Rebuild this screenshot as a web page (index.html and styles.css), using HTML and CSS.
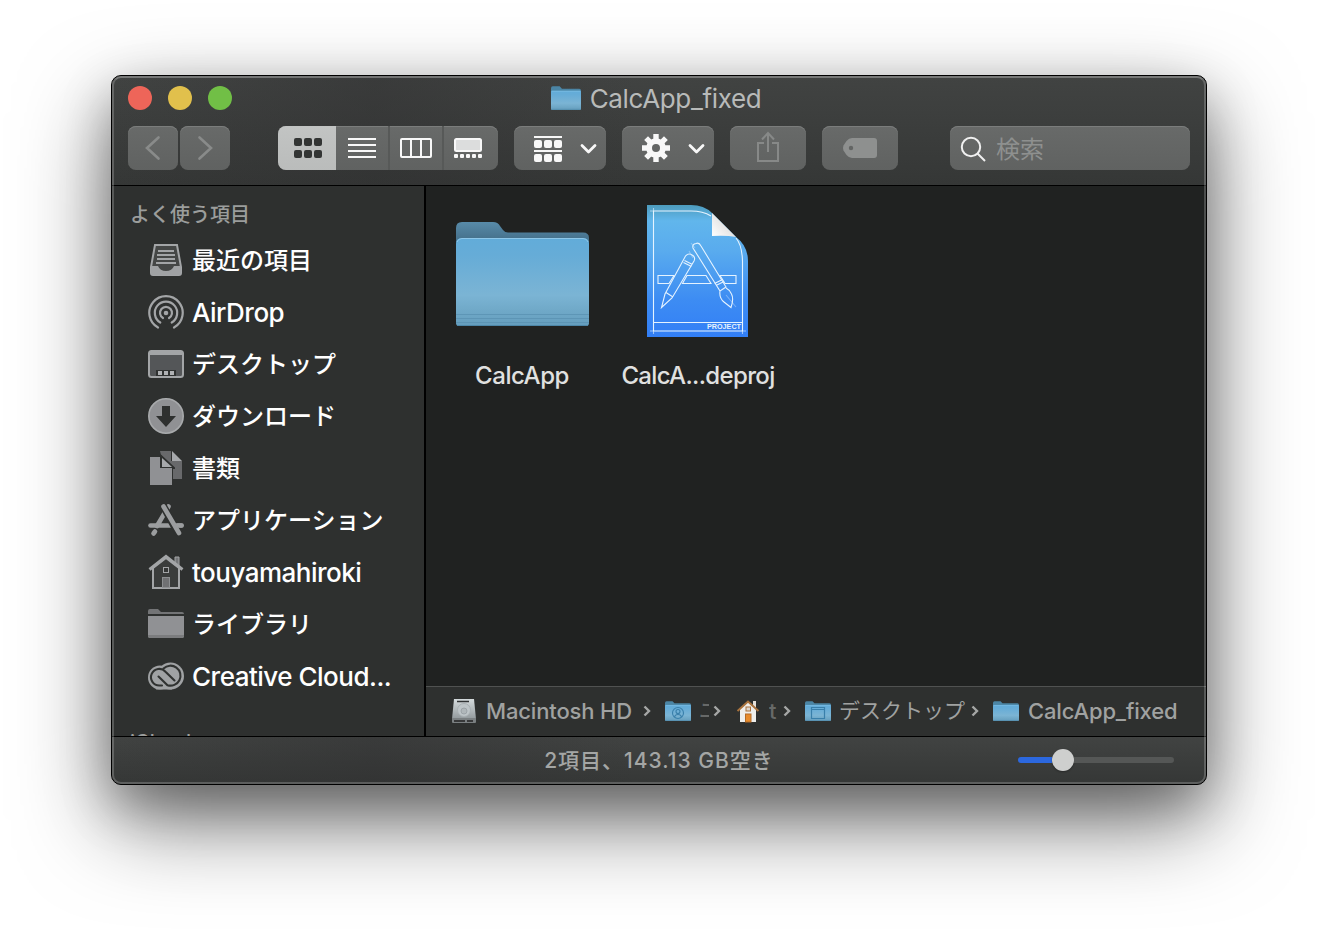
FILE: index.html
```html
<!DOCTYPE html>
<html lang="ja">
<head>
<meta charset="utf-8">
<title>CalcApp_fixed</title>
<link rel="stylesheet" href="styles.css">
</head>
<body>
<svg class="defs" aria-hidden="true">
  <defs>
    <linearGradient id="front" x1="0" y1="0" x2="0" y2="1">
      <stop offset="0" stop-color="#62acd9"/><stop offset=".2" stop-color="#66acd7"/><stop offset=".65" stop-color="#7bb4d4"/><stop offset=".82" stop-color="#70a9c8"/><stop offset="1" stop-color="#649dbd"/>
    </linearGradient>
    <linearGradient id="back" x1="0" y1="0" x2="0" y2="1">
      <stop offset="0" stop-color="#588ba9"/><stop offset=".8" stop-color="#446f89"/>
    </linearGradient>
    <linearGradient id="blueprint" x1="0" y1="0" x2="0" y2="1">
      <stop offset="0" stop-color="#4d9cbd"/><stop offset=".12" stop-color="#61b6ec"/><stop offset=".35" stop-color="#59abee"/><stop offset=".72" stop-color="#3d8cf3"/><stop offset="1" stop-color="#327ff6"/>
    </linearGradient>
    <linearGradient id="curl" x1="0" y1="1" x2=".7" y2=".4">
      <stop offset="0" stop-color="#fff"/><stop offset="1" stop-color="#dedede"/>
    </linearGradient>
    <linearGradient id="disk" x1="0" y1="0" x2="0" y2="1">
      <stop offset="0" stop-color="#d5dbdd"/><stop offset="1" stop-color="#92999c"/>
    </linearGradient>
  </defs>
  <symbol id="folder" viewBox="0 0 26 20" preserveAspectRatio="none">
    <path d="M0 2Q0 .3 1.500 .3H7.500L9.500 2.200H24.500Q26 2.200 26 4V8H0Z" fill="#4b85a5"/>
    <rect y="4" width="26" height="16" rx="1" fill="url(#front)"/>
    <path d="M.5 4.400H25.500" stroke="#7dbfe6" stroke-width=".6"/>
    <path d="M.5 19.500H25.500" stroke="#568fae" stroke-width=".8"/>
  </symbol>
</svg>

<main class="window">
  <header class="toolbar">
    <div class="titlebar">
      <div class="lights"><i class="light red"></i><i class="light yellow"></i><i class="light green"></i></div>
      <div class="title"><svg width="30" height="24"><use href="#folder" width="30" height="24"/></svg><span>CalcApp_fixed</span></div>
    </div>
    <div class="tools">
      <div class="btn nav"><svg width="50" height="44"><path d="M30.500 11.500L19 22L30.500 32.500" class="dim"/></svg></div>
      <div class="btn nav"><svg width="50" height="44"><path d="M19.500 11.500L31 22L19.500 32.500" class="dim"/></svg></div>
      <div class="segments">
        <div class="seg on"><svg width="58" height="44" fill="#333534"><rect x="16" y="12" width="8" height="8" rx="2"/><rect x="26" y="12" width="8" height="8" rx="2"/><rect x="36" y="12" width="8" height="8" rx="2"/><rect x="16" y="24" width="8" height="8" rx="2"/><rect x="26" y="24" width="8" height="8" rx="2"/><rect x="36" y="24" width="8" height="8" rx="2"/></svg></div>
        <div class="seg list"><svg width="52" height="44"><path d="M12 13H40M12 19H40M12 25H40M12 31H40" stroke="#f8f8f8" stroke-width="2"/></svg></div>
        <div class="seg"><svg width="52" height="44" fill="none" stroke="#f8f8f8" stroke-width="2"><rect x="11" y="13" width="30" height="18" rx="1"/><path d="M21 13V31M31 13V31"/></svg></div>
        <div class="seg"><svg width="52" height="44" fill="#f8f8f8"><rect x="11" y="13" width="26" height="12" rx="1.500" fill="#dcdddd" stroke="#f8f8f8" stroke-width="2"/><rect x="10" y="28" width="4" height="4" rx="1"/><rect x="16" y="28" width="4" height="4" rx="1"/><rect x="22" y="28" width="4" height="4" rx="1"/><rect x="28" y="28" width="4" height="4" rx="1"/><rect x="34" y="28" width="4" height="4" rx="1"/></svg></div>
      </div>
      <div class="btn menu"><svg width="92" height="44" fill="#f8f8f8"><path d="M20 10H48V12H20ZM20 24H48V26H20Z"/><rect x="20" y="14" width="8" height="8" rx="2"/><rect x="30" y="14" width="8" height="8" rx="2"/><rect x="40" y="14" width="8" height="8" rx="2"/><rect x="20" y="28" width="8" height="8" rx="2"/><rect x="30" y="28" width="8" height="8" rx="2"/><rect x="40" y="28" width="8" height="8" rx="2"/><path d="M68 19.500L74.500 26L81 19.500" class="caret"/></svg></div>
      <div class="btn menu"><svg width="92" height="44"><g stroke="#f8f8f8" stroke-width="5.400"><path d="M34 8V36M20 22H48M24.100 12.100L43.900 31.900M43.900 12.100L24.100 31.900"/></g><circle cx="34" cy="22" r="9.800" fill="#f8f8f8"/><circle cx="34" cy="22" r="4" fill="#636564"/><path d="M68 19.500L74.500 26L81 19.500" class="caret"/></svg></div>
      <div class="btn single"><svg width="76" height="44" fill="none" stroke="#878988" stroke-width="2"><path d="M34 17H28V35H48V17H42M38 26V8M32 13.500L38 7L44 13.500"/></svg></div>
      <div class="btn single"><svg width="76" height="44"><path d="M30 12H52Q55 12 55 15V29Q55 32 52 32H30Q27 32 24.500 29L21.500 24.500Q20.500 22 21.500 19.500L24.500 15Q27 12 30 12Z" fill="#8e908f"/><circle cx="29" cy="22" r="2.200" fill="#636564"/></svg></div>
      <div class="btn search"><svg width="46" height="44" fill="none" stroke="#f0f0f0" stroke-width="2"><circle cx="21" cy="21" r="9.200"/><path d="M27.500 27.500L35 35"/></svg><span>検索</span></div>
    </div>
  </header>

  <div class="body">
    <aside class="sidebar">
      <h2>よく使う項目</h2>
      <ul>
        <li><svg width="36" height="36"><path d="M7 3H29L33 25V31Q33 33 31 33H5Q3 33 3 31V25Z" fill="#454746" stroke="#a3a5a7" stroke-width="2"/><path d="M3 24H10Q12 29 18 29T26 24H33V31Q33 33 31 33H5Q3 33 3 31Z" fill="#a0a2a4"/><path d="M10 9H26M9 13H27M9 17H27M8 21H28" stroke="#a3a5a7" stroke-width="2"/></svg><span>最近の項目</span></li>
        <li class="latin"><svg width="36" height="36" fill="none" stroke="#a3a5a7" stroke-width="2.200" stroke-linecap="round"><circle cx="18" cy="19" r="2.300" fill="#a3a5a7" stroke="none"/><path d="M15 24A6 6 0 1 1 21 24"/><path d="M12.300 28.500A11.200 11.200 0 1 1 23.700 28.500"/><path d="M10 33.500A16.700 16.700 0 1 1 26 33.500"/></svg><span>AirDrop</span></li>
        <li><svg width="36" height="36"><rect x="1" y="5" width="34" height="26" rx="2.500" fill="#545658" stroke="#a3a5a7" stroke-width="2"/><path d="M2 5H34V9H2Z" fill="#a3a5a7"/><path d="M8 24H28V30H8Z" fill="#303231"/><path d="M10 25H14V29H10ZM16 25H20V29H16ZM22 25H26V29H22Z" fill="#b0b2b4"/></svg><span>デスクトップ</span></li>
        <li><svg width="36" height="36"><circle cx="18" cy="18" r="17.200" fill="#909194" stroke="#a8aaac" stroke-width="1.600"/><path d="M14 8H22V18H28L18 29L8 18H14Z" fill="#2e302f"/></svg><span>ダウンロード</span></li>
        <li><svg width="36" height="36"><path d="M12 1H23V11H34V29H25V17L13 5Z" fill="#68696b"/><path d="M24 1L34 11H24Z" fill="#a7a9ac"/><path d="M2 7H12V18H24V35H2Z" fill="#909194"/><path d="M12 5L26 18V19" fill="none" stroke="#2e302f" stroke-width="2"/><path d="M14 8L24 17H14Z" fill="#a7a9ac"/></svg><span>書類</span></li>
        <li><svg width="36" height="36" fill="none" stroke="#9b9d9f" stroke-width="4.600" stroke-linecap="round"><path d="M20.500 4.500L9 24"/><path d="M2.500 23.500H33.500"/><path d="M7 29.500L5.500 31.500"/><path d="M15 3.500L31 33" stroke="#2e302f" stroke-width="7.500" stroke-linecap="butt"/><path d="M15.500 4.500L31 31"/><path d="M28 23.500H33.500"/></svg><span>アプリケーション</span></li>
        <li class="latin"><svg width="36" height="36"><path d="M27 3H31V14L27 10Z" fill="#747678" stroke="#a3a5a7"/><path d="M5 14L18 4L31 14V34H5Z" fill="#3a3c3b" stroke="#a3a5a7" stroke-width="2"/><path d="M1.500 15.500L18 2.500L34.500 15.500" fill="none" stroke="#a3a5a7" stroke-width="3"/><rect x="15.500" y="13.500" width="5" height="5" fill="#343635" stroke="#a3a5a7"/><rect x="14.500" y="23.500" width="7" height="10" fill="#707173" stroke="#8d8f91"/></svg><span>touyamahiroki</span></li>
        <li><svg width="36" height="36"><path d="M0 8V5Q0 3 2 3H10L13 6H34Q36 6 36 8Z" fill="#737476"/><path d="M0 10H36V30Q36 32 34 32H2Q0 32 0 30Z" fill="#909194"/><path d="M0 29H36V30Q36 32 34 32H2Q0 32 0 30Z" fill="#7b7c7e"/></svg><span>ライブラリ</span></li>
        <li class="latin"><svg width="36" height="36"><g fill="#a0a2a4"><circle cx="22.500" cy="18" r="13.500"/><circle cx="12" cy="19.500" r="12"/><rect x="8" y="26" width="16" height="5.500"/></g><g fill="none" stroke="#303231" stroke-width="2.100" stroke-linecap="round"><path d="M14 27.500H11.500A8.300 8.300 0 1 1 17.500 13.700L26.500 22.500"/><path d="M15.500 10.500A10 10 0 1 1 19.500 27.200L10.500 18.500"/></g></svg><span>Creative Cloud...</span></li>
      </ul>
      <h2 class="next">iCloud</h2>
    </aside>

    <section class="content">
      <div class="files">
        <figure>
          <div class="thumb folder"><svg width="133" height="106">
            <path d="M0 6Q0 0 6 0H37Q42 0 44 4L47 8Q49 10.500 52 10.500H127Q133 10.500 133 16V24H0Z" fill="url(#back)"/>
            <path d="M0 22Q0 16 6 16H127Q133 16 133 22V101Q133 104 130 104H3Q0 104 0 101Z" fill="url(#front)"/>
            <path d="M1 20Q2 16.500 6 16.500H127Q131 16.500 132 20" fill="none" stroke="#8dc7e9"/>
            <path d="M0 92.500H133M0 96.500H133M0 100.500H133" stroke="#5890b0" opacity=".7"/><path d="M1 103.500H132" stroke="#4d86a7"/>
          </svg></div>
          <figcaption>CalcApp</figcaption>
        </figure>
        <figure>
          <div class="thumb"><svg width="102" height="134">
            <path d="M0 1H44Q57 1 65 9L89 33Q101 42 101 57V133H0Z" fill="url(#blueprint)"/>
            <g fill="none" stroke="#e5f3ff" stroke-width="1.100">
              <path d="M89 34Q95 41 95.500 57V127H6.500V7H44Q56 7 64 12M6.500 118.500H95.500"/>
              <path d="M3 7H6M6.500 4V7M3 127H6M6.500 127V130M95.500 127V130M96 127H99" opacity=".6"/>
              <path d="M11 71.500H27L22 79.500H11ZM40 71.500H59L64 79.500H35.500ZM73 71.500H89V79.500H78Z"/>
              <path d="M38.500 52Q42 48 46.500 52Q48.500 54 47 57L25 94L14.500 103.500L18 90ZM37.500 56.500L45.500 60.500M36.500 58.500L44.500 62.500M19 88.500L26 93"/>
              <path d="M46 44Q45 40 49 39.500Q52 38 54 42L79 83L73 87ZM67.500 79.500L75.500 75.500M69 81.500L77 77.500M73 87Q72 94 77 98L84 103.500Q87 95 84.500 90Q83 86 79 84"/>
              <path d="M42 47L46 54M44 39L48 44M79 91L89 103" opacity=".35"/>
            </g>
            <path d="M65 9L89 33Q79 31 65 32Z" fill="url(#curl)"/>
            <text x="60" y="125.300" textLength="34" lengthAdjust="spacingAndGlyphs" class="project">PROJECT</text>
          </svg></div>
          <figcaption class="long">CalcA...deproj</figcaption>
        </figure>
      </div>
      <nav class="path">
        <svg width="26" height="28" class="drive"><path d="M3 2H23L25 22H1Z" fill="url(#disk)"/><path d="M1 21H25V25Q25 26 24 26H2Q1 26 1 25Z" fill="#7a7f81"/><path d="M3 24H14M16 24H22" stroke="#222" stroke-width="1.500"/><path d="M6 4.500H18" stroke="#303334" stroke-width="1.500"/><circle cx="13" cy="13" r="6.500" fill="#bec5c8" stroke="#a9b0b3"/><circle cx="13" cy="14" r="3" fill="#b0b7ba" stroke="#929a9d" stroke-width=".7"/></svg>
        <span class="name hd">Macintosh HD</span>
        <svg class="chev" width="8" height="14"><path d="M1.500 2.500L6 7L1.500 11.500"/></svg>
        <svg class="pf" width="26" height="20"><use href="#folder" width="26" height="20"/><g fill="none" stroke="#397faa" stroke-width="1.100"><circle cx="13" cy="12" r="5.500"/><circle cx="13" cy="10.500" r="2"/><path d="M9.500 16Q10 13.500 13 13.500T16.500 16"/></g></svg>
        <span class="name users">ユ</span>
        <svg class="chev" width="8" height="14"><path d="M1.500 2.500L6 7L1.500 11.500"/></svg>
        <svg class="home" width="24" height="24"><path d="M17 2H20V9H17Z" fill="#e4e0da"/><path d="M4 10L12 3L20 10V23H4Z" fill="#eeeeec"/><path d="M1.500 12L12 2.500L22.500 12" fill="none" stroke="#a9733e" stroke-width="2"/><rect x="10" y="8" width="4.500" height="4" fill="#ded7ce" stroke="#a9733e"/><rect x="9.500" y="15" width="5.500" height="8" fill="#e78b2c" stroke="#b36b26"/></svg>
        <span class="name user">t</span>
        <svg class="chev" width="8" height="14"><path d="M1.500 2.500L6 7L1.500 11.500"/></svg>
        <svg class="pf" width="26" height="20"><use href="#folder" width="26" height="20"/><path d="M6.500 6.500H19.500V17.500H6.500ZM6.500 8.500H19.500" fill="none" stroke="#397faa" stroke-width="1.200"/></svg>
        <span class="name desk">デスクトップ</span>
        <svg class="chev" width="8" height="14"><path d="M1.500 2.500L6 7L1.500 11.500"/></svg>
        <svg class="pf" width="26" height="20"><use href="#folder" width="26" height="20"/></svg>
        <span class="name last">CalcApp_fixed</span>
      </nav>
    </section>
  </div>

  <footer class="status">
    <span class="count">2項目、143.13 GB空き</span>
    <div class="slider"><div class="fill"></div><div class="knob"></div><div class="rest"></div></div>
  </footer>
</main>
</body>
</html>
```
FILE: styles.css
```css
* { box-sizing: border-box; }
body {
  margin: 0;
  height: 932px;
  padding: 75px 0 0 111px;
  overflow: hidden;
  background: #fff;
  font-family: Inter, "Noto Sans CJK JP", sans-serif;
}
svg { display: block; flex: none; }
.defs { position: absolute; width: 0; height: 0; }

.window {
  position: relative;
  display: flex;
  flex-direction: column;
  width: 1096px;
  height: 710px;
  border: 1px solid #000;
  border-radius: 10px;
  background: #202221;
  box-shadow: 0 36px 90px rgba(0, 0, 0, .54), 0 20px 50px rgba(0, 0, 0, .26);
}
/* light rim drawn over the window edge */
.window::after {
  content: "";
  position: absolute;
  inset: 0;
  border: 2px solid rgba(255, 255, 255, .2);
  border-top-color: rgba(255, 255, 255, .29);
  border-radius: 9px;
  pointer-events: none;
}

.toolbar {
  height: 110px;
  border-bottom: 1px solid #000;
  border-radius: 9px 9px 0 0;
  background: linear-gradient(90deg, rgba(47, 47, 48, 0) 0, rgba(47, 47, 48, .4) 24%, rgba(47, 47, 48, 0) 48%), linear-gradient(#414342, #353736);
}
.titlebar { display: grid; grid-template-columns: 1fr auto 1fr; align-items: center; height: 44px; padding: 0 22px 0 16px; }
.lights { display: flex; gap: 16px; }
.light { width: 24px; height: 24px; border-radius: 50%; }
.red { background: #ee6559; }
.yellow { background: #e1c04c; }
.green { background: #71bf46; }
.title { display: flex; align-items: center; gap: 9px; color: #b8bab9; font-size: 26px; letter-spacing: -.35px; line-height: 44px; }
.title span { padding-top: 2px; line-height: 42px; }

.tools { display: flex; height: 44px; margin-top: 6px; padding: 0 16px; }
.btn, .segments { height: 44px; border-radius: 8px; background: linear-gradient(#686a69, #606261); box-shadow: inset 0 1px 0 #7b7d7c; }
.nav { width: 50px; margin-right: 2px; }
.dim { fill: none; stroke: #898b8a; stroke-width: 2.6; stroke-linecap: round; }
.caret { fill: none; stroke: #f8f8f8; stroke-width: 2.8; stroke-linecap: round; stroke-linejoin: round; }
.segments { display: flex; width: 220px; margin: 0 16px 0 46px; overflow: hidden; }
.seg { width: 54px; border-left: 2px solid #575958; }
.seg.on { width: 58px; border: 0; background: linear-gradient(#c2c4c3, #babcbb); }
.seg.list { width: 52px; border: 0; }
.menu { width: 92px; margin-right: 16px; }
.single { width: 76px; margin-right: 16px; }
.search { display: flex; width: 240px; margin-left: 36px; color: #8e908f; font-size: 24px; line-height: 47px; }

.body { display: flex; height: 551px; border-bottom: 1px solid #000; }
.sidebar { width: 314px; padding-left: 18px; border-right: 2px solid #000; background: #2e302f; overflow: hidden; }
h2 { height: 48px; margin: 0; padding-top: 8px; color: #9b9d9c; font-size: 20px; font-weight: 500; line-height: 42px; }
.next { padding-top: 19px; }
ul { margin: 0; padding: 0; list-style: none; }
li { display: flex; align-items: center; gap: 8px; height: 52px; padding-left: 18px; color: #fff; font-size: 24px; font-weight: 500; white-space: nowrap; }
li span { padding-bottom: 3px; }
.latin { font-size: 26px; letter-spacing: -.5px; }
.latin span { padding-bottom: 0; }

.content { display: flex; flex: 1; flex-direction: column; min-width: 0; }
.files { display: flex; flex: 1; padding-left: 8px; }
figure { display: flex; flex-direction: column; align-items: center; width: 176px; margin: 0; padding-top: 17px; }
.thumb { display: flex; align-items: center; justify-content: center; height: 136px; }
.folder { padding-top: 7px; }
figcaption { margin-top: 17px; color: #e0e1e0; font-size: 24px; font-weight: 500; line-height: 40px; letter-spacing: -.45px; white-space: nowrap; }
.long { letter-spacing: -.65px; }
.project { fill: #e5f3ff; font: bold 7px "Liberation Sans", sans-serif; }

.path { display: flex; align-items: center; height: 50px; padding: 0 0 2px 25px; border-top: 1px solid #505251; background: #2e302f; color: #a0a2a1; font-size: 22px; font-weight: 500; letter-spacing: -.15px; }
.name { overflow: hidden; white-space: nowrap; line-height: 40px; }
.chev { fill: none; stroke: #a5a7a6; stroke-width: 2.4; }
.hd { width: 148px; margin: 0 9px; }
.pf { margin-left: 14px; }
.users { width: 10px; margin: 0 4px 0 8px; font-size: 20px; opacity: .5; }
.home { margin-left: 15px; }
.user { width: 10px; margin: 0 4px 0 9px; opacity: .5; }
.desk { width: 127px; margin: 0 5px 0 8px; font-size: 21px; font-weight: 400; letter-spacing: 0; }
.last { margin-left: 9px; }

.status { position: relative; display: flex; flex: 1; align-items: center; justify-content: center; padding-bottom: 2px; border-radius: 0 0 9px 9px; background: linear-gradient(90deg, rgba(47, 47, 48, 0), rgba(47, 47, 48, .4) 24%, rgba(47, 47, 48, 0) 48%), linear-gradient(#414342, #353736); }
.count { padding-bottom: 2px; color: #a4a6a5; font-size: 21px; font-weight: 500; letter-spacing: 1px; }
.slider { position: absolute; right: 32px; display: flex; align-items: center; width: 156px; height: 22px; }
.fill { width: 34px; height: 6px; border-radius: 3px 0 0 3px; background: #2c68df; }
.knob { width: 22px; height: 22px; border-radius: 50%; background: #cecfce; box-shadow: 0 1px 2px rgba(0, 0, 0, .3); }
.rest { flex: 1; height: 6px; border-radius: 0 3px 3px 0; background: #555756; }
```
